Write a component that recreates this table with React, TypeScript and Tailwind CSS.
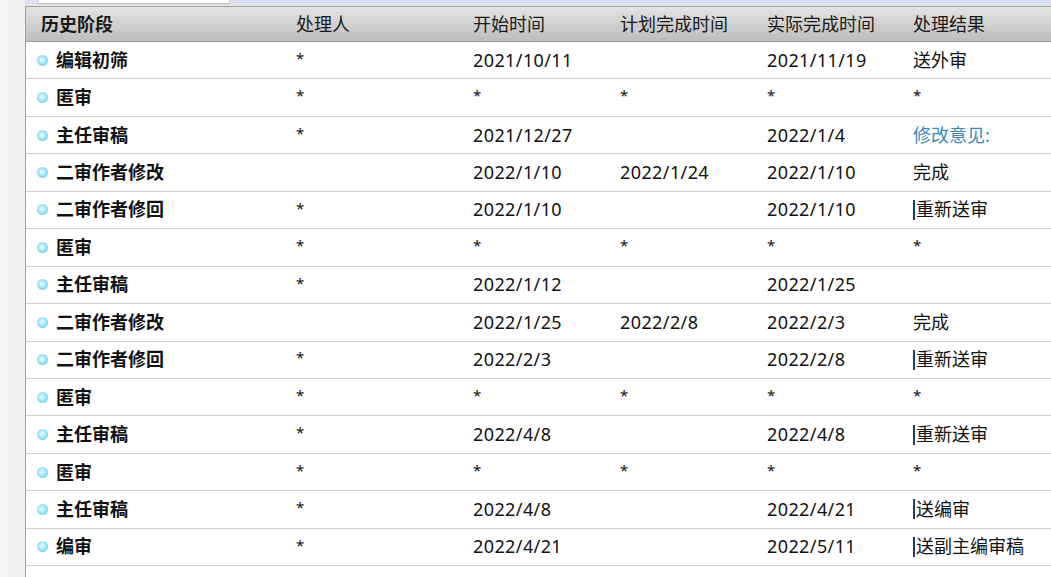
import React from "react";

type Row = {
  stage: string;
  handler: string;
  start: string;
  plan: string;
  actual: string;
  result: string;
  blue?: boolean;
};

const rows: Row[] = [
  { stage: "编辑初筛", handler: "*", start: "2021/10/11", plan: "", actual: "2021/11/19", result: "送外审" },
  { stage: "匿审", handler: "*", start: "*", plan: "*", actual: "*", result: "*" },
  { stage: "主任审稿", handler: "*", start: "2021/12/27", plan: "", actual: "2022/1/4", result: "修改意见:", blue: true },
  { stage: "二审作者修改", handler: "", start: "2022/1/10", plan: "2022/1/24", actual: "2022/1/10", result: "完成" },
  { stage: "二审作者修回", handler: "*", start: "2022/1/10", plan: "", actual: "2022/1/10", result: "|重新送审" },
  { stage: "匿审", handler: "*", start: "*", plan: "*", actual: "*", result: "*" },
  { stage: "主任审稿", handler: "*", start: "2022/1/12", plan: "", actual: "2022/1/25", result: "" },
  { stage: "二审作者修改", handler: "", start: "2022/1/25", plan: "2022/2/8", actual: "2022/2/3", result: "完成" },
  { stage: "二审作者修回", handler: "*", start: "2022/2/3", plan: "", actual: "2022/2/8", result: "|重新送审" },
  { stage: "匿审", handler: "*", start: "*", plan: "*", actual: "*", result: "*" },
  { stage: "主任审稿", handler: "*", start: "2022/4/8", plan: "", actual: "2022/4/8", result: "|重新送审" },
  { stage: "匿审", handler: "*", start: "*", plan: "*", actual: "*", result: "*" },
  { stage: "主任审稿", handler: "*", start: "2022/4/8", plan: "", actual: "2022/4/21", result: "|送编审" },
  { stage: "编审", handler: "*", start: "2022/4/21", plan: "", actual: "2022/5/11", result: "|送副主编审稿" },
];

const cols = "grid grid-cols-[270px_177px_147px_147px_146px_1fr]";

const Cell = ({ text }: { text: string }) => {
  if (text === "*") return <div className="text-[15px] pb-[4px]">*</div>;
  if (text.startsWith("|"))
    return (
      <div className="flex items-center">
        <span className="inline-block w-[2px] h-[20px] bg-[#1f3f66] mr-[1px]" />
        {text.slice(1)}
      </div>
    );
  // dates get a bit of extra spacing
  return <div className={/^\d/.test(text) ? "tracking-[0.4px]" : ""}>{text}</div>;
};

export default function App() {
  return (
    <div
      className="w-[1051px] h-[577px] overflow-hidden bg-white flex text-[18px] text-[#111]"
      style={{ fontFamily: '"Noto Sans", "Noto Sans CJK SC", sans-serif' }}
    >
      {/* LEFT STRIP */}
      <div className="w-[25px] h-full bg-[#efefef] border-l-[8px] border-[#f6f6f6]" />
      <div className="flex-1 flex flex-col min-w-0">
        {/* TOP STRIP */}
        <div className="h-[4px] bg-[#dde0f4] relative">
          <div className="absolute left-[13px] top-0 w-[192px] h-[4px] bg-white border-b border-[#b9bcc8] border-x border-x-[#d6d6d6]" />
        </div>
        <div className="h-[3px] bg-[#e4e4e4] border-b border-[#a3a3a3]" />
        {/* TABLE */}
        <div className="flex-1 border-l border-[#a0a0a0]">
          <div
            className={`${cols} h-[35px] items-center bg-gradient-to-b from-[#e4e4e4] to-[#bdbdbd] border-b border-[#9a9a9a] text-[#1a1a1a]`}
          >
            <div className="pl-[15px] font-bold">历史阶段</div>
            <div>处理人</div>
            <div>开始时间</div>
            <div>计划完成时间</div>
            <div>实际完成时间</div>
            <div>处理结果</div>
          </div>
          {rows.map((r, i) => (
            <div
              key={i}
              className={`${cols} h-[37.45px] items-center border-b border-[#cfcfcf]`}
            >
              <div className="flex items-center pl-[11px] gap-[8px] font-bold">
                <span className="w-[11px] h-[11px] rounded-full bg-[radial-gradient(circle_at_45%_45%,#f0fdff_0%,#a8e8fd_40%,#46bff0_100%)]" />
                {r.stage}
              </div>
              <Cell text={r.handler} />
              <Cell text={r.start} />
              <Cell text={r.plan} />
              <Cell text={r.actual} />
              {r.blue ? (
                <div className="text-[#3a88c0]">{r.result}</div>
              ) : (
                <Cell text={r.result} />
              )}
            </div>
          ))}
        </div>
      </div>
    </div>
  );
}
